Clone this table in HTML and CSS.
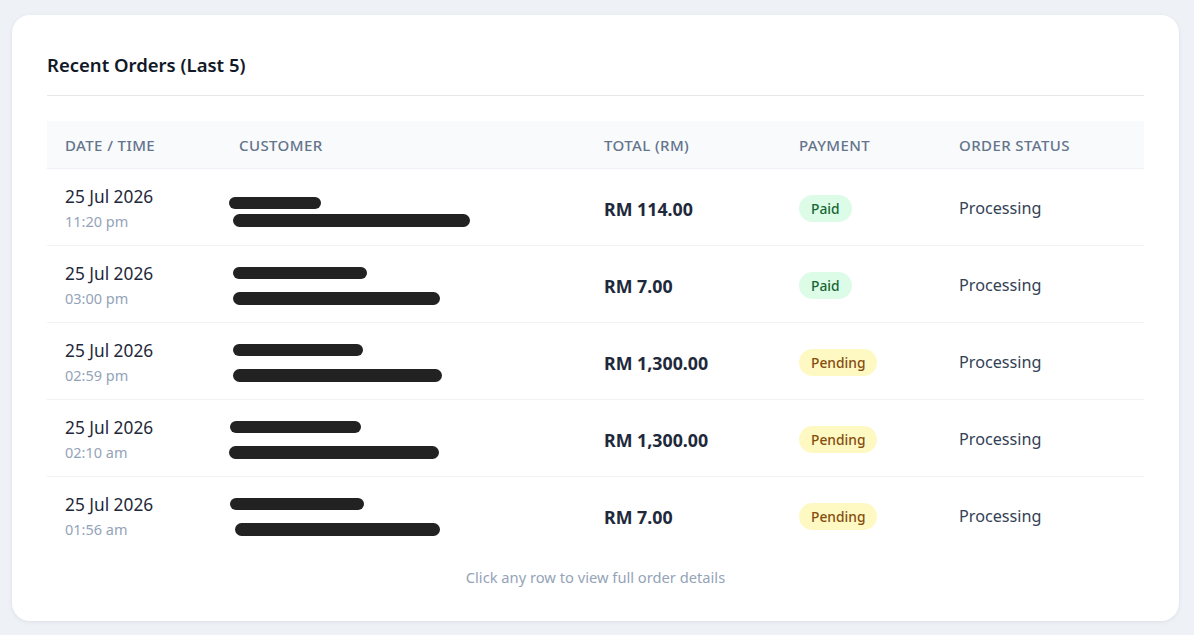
FILE: index.html
```html
<!DOCTYPE html>
<html lang="en">
<head>
<meta charset="utf-8">
<title>Recent Orders</title>
<link rel="stylesheet" href="styles.css">
</head>
<body>
<div class="card">
  <h2 class="title">Recent Orders (Last 5)</h2>
  <div class="table">
    <div class="row head">
      <div class="cell">Date / Time</div>
      <div class="cell">Customer</div>
      <div class="cell">Total (RM)</div>
      <div class="cell">Payment</div>
      <div class="cell">Order Status</div>
    </div>

    <div class="row">
      <div class="cell"><div class="date">25 Jul 2026</div><div class="time">11:20 pm</div></div>
      <div class="cell cust first"><span class="bar name" style="width:92px;margin-left:-10px"></span><span class="bar mail" style="width:237px;margin-left:-6px"></span></div>
      <div class="cell total">RM 114.00</div>
      <div class="cell"><span class="badge paid">Paid</span></div>
      <div class="cell status">Processing</div>
    </div>

    <div class="row">
      <div class="cell"><div class="date">25 Jul 2026</div><div class="time">03:00 pm</div></div>
      <div class="cell cust"><span class="bar name" style="width:134px;margin-left:-6px"></span><span class="bar mail" style="width:207px;margin-left:-6px"></span></div>
      <div class="cell total">RM 7.00</div>
      <div class="cell"><span class="badge paid">Paid</span></div>
      <div class="cell status">Processing</div>
    </div>

    <div class="row">
      <div class="cell"><div class="date">25 Jul 2026</div><div class="time">02:59 pm</div></div>
      <div class="cell cust"><span class="bar name" style="width:130px;margin-left:-6px"></span><span class="bar mail" style="width:209px;margin-left:-6px"></span></div>
      <div class="cell total">RM 1,300.00</div>
      <div class="cell"><span class="badge pending">Pending</span></div>
      <div class="cell status">Processing</div>
    </div>

    <div class="row">
      <div class="cell"><div class="date">25 Jul 2026</div><div class="time">02:10 am</div></div>
      <div class="cell cust"><span class="bar name" style="width:131px;margin-left:-9px"></span><span class="bar mail" style="width:210px;margin-left:-10px"></span></div>
      <div class="cell total">RM 1,300.00</div>
      <div class="cell"><span class="badge pending">Pending</span></div>
      <div class="cell status">Processing</div>
    </div>

    <div class="row">
      <div class="cell"><div class="date">25 Jul 2026</div><div class="time">01:56 am</div></div>
      <div class="cell cust"><span class="bar name" style="width:134px;margin-left:-9px"></span><span class="bar mail" style="width:205px;margin-left:-4px"></span></div>
      <div class="cell total">RM 7.00</div>
      <div class="cell"><span class="badge pending">Pending</span></div>
      <div class="cell status">Processing</div>
    </div>
  </div>
  <p class="hint">Click any row to view full order details</p>
</div>
</body>
</html>
```

FILE: styles.css
```css
* { box-sizing: border-box; }
html, body { margin: 0; }
body {
  background: #eef1f6;
  font-family: "Noto Sans", "Open Sans", sans-serif;
  color: #1e293b;
  padding: 15px 15px 14px 12px;
}
.card {
  background: #fff;
  border-radius: 18px;
  box-shadow: 0 1px 4px rgba(15, 23, 42, 0.08);
  padding: 36px 35px 24px 35px;
  height: 606px;
}
.title {
  margin: 0;
  font-size: 18.5px;
  font-weight: 600;
  line-height: 28px;
  padding-bottom: 16px;
  border-bottom: 1px solid #e5e7eb;
  color: #111827;
}
.table {
  margin-top: 25px;
}
.row {
  display: grid;
  grid-template-columns: 174px 365px 195px 160px 1fr;
  border-bottom: 1px solid #f0f2f5;
  align-items: center;
}
.row:last-child { border-bottom: none; }
.cell {
  padding: 16px 18px 14px;
}
.head {
  background: #f8fafc;
  border-bottom: 1px solid #eef1f5;
}
.head .cell {
  padding: 14px 18px 13px;
  font-size: 15px;
  line-height: 20px;
  font-weight: 500;
  text-transform: uppercase;
  letter-spacing: 0.4px;
  color: #64748b;
}
.date {
  font-size: 17.3px;
  line-height: 24px;
  color: #1e293b;
}
.time {
  margin-top: 2px;
  font-size: 14.5px;
  line-height: 20px;
  color: #94a3b8;
}
.cust {
  display: flex;
  flex-direction: column;
  gap: 13px;
  align-items: flex-start;
  align-self: stretch;
  padding-top: 21px;
}
.cust.first {
  padding-top: 28px;
  gap: 5px;
}
.bar {
  display: block;
  background: #222;
  border-radius: 7px;
}
.bar.name { height: 12px; }
.bar.mail { height: 13px; }
.total {
  font-size: 17.8px;
  font-weight: 700;
  color: #1e293b;
  padding-top: 17px;
  padding-bottom: 14px;
}
.badge {
  display: inline-block;
  font-size: 13.8px;
  font-weight: 500;
  line-height: 19px;
  padding: 4px 12px;
  border-radius: 999px;
}
.paid { background: #dcfce7; color: #166534; }
.pending { background: #fef9c3; color: #854d0e; }
.status {
  font-size: 16.2px;
  color: #334155;
}
.hint {
  margin: 14px 0 0;
  text-align: center;
  font-size: 14.7px;
  line-height: 20px;
  color: #94a3b8;
}
```
